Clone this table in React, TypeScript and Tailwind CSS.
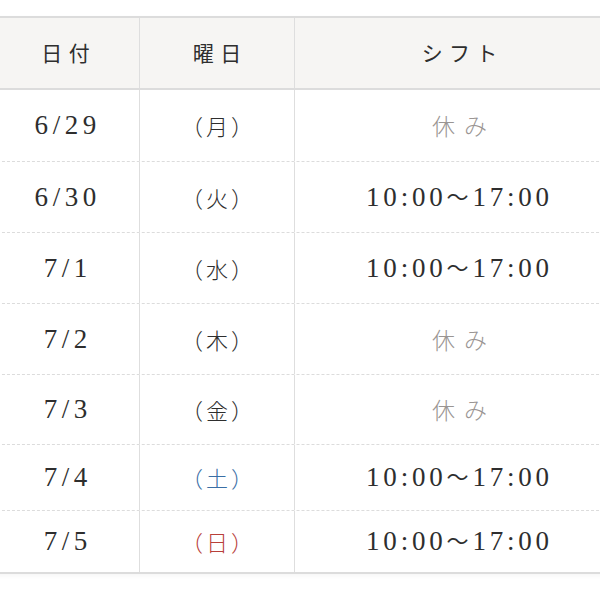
const rows = [
  { date: "6/29", day: "月", shift: null, h: "h-[71px]" },
  { date: "6/30", day: "火", shift: true, h: "h-[71px]" },
  { date: "7/1", day: "水", shift: true, h: "h-[71px]" },
  { date: "7/2", day: "木", shift: null, h: "h-[71px]" },
  { date: "7/3", day: "金", shift: null, h: "h-[70px]" },
  { date: "7/4", day: "土", shift: true, h: "h-[66px]" },
  { date: "7/5", day: "日", shift: true, h: "h-[62px]" },
]

const dayColor = (d: string) =>
  d === "土" ? "text-[#3a6ea5]" : d === "日" ? "text-[#b8403a]" : "text-[#2e2e2e]"

export default function App() {
  return (
    <div className="w-[600px] h-[600px] bg-white pt-4 font-['Liberation_Serif','Noto_Sans_CJK_JP',serif] text-[#2e2e2e] overflow-hidden">
      <div className="w-[632px] -ml-[8px] border-t-2 border-b-2 border-[#dcdcdc] shadow-[0_2px_4px_rgba(0,0,0,0.04)]">
        {/* header */}
        <div className="grid grid-cols-[147px_155px_1fr] h-[72px] bg-[#f6f5f3] border-b-2 border-[#dcdcdc] text-[21px] font-['Noto_Sans_CJK_JP',serif]">
          <div className="flex items-center justify-center tracking-[0.3em] pl-[0.3em]">日付</div>
          <div className="flex items-center justify-center border-l border-[#dedede] tracking-[0.3em] pl-[0.3em]">曜日</div>
          <div className="flex items-center justify-center border-l border-[#dedede] tracking-[0.3em] pl-[0.3em]">シフト</div>
        </div>
        {rows.map((r, i) => (
          <div
            key={r.date}
            className={`grid grid-cols-[147px_155px_1fr] ${r.h} ${i > 0 ? "border-t border-dashed border-[#dcdcdc]" : ""}`}
          >
            <div className="flex items-center justify-center text-[27px] tracking-[0.17em] pl-[0.17em]">{r.date}</div>
            <div className={`flex items-center justify-center border-l border-[#dedede] text-[22px] font-['Noto_Sans_CJK_JP',serif] font-light ${dayColor(r.day)}`}>
              <span>（</span>
              <span className="px-[3px]">{r.day}</span>
              <span>）</span>
            </div>
            <div className="flex items-center justify-center border-l border-[#dedede]">
              {r.shift ? (
                <span className="flex items-center text-[27px] tracking-[0.14em]">
                  <span>10:00</span>
                  <span className="text-[22px] tracking-normal mr-[4px]">～</span>
                  <span>17:00</span>
                </span>
              ) : (
                <span className="text-[23px] text-[#9a9593] font-['Noto_Sans_CJK_JP',serif] font-light tracking-[0.4em] pl-[0.4em]">休み</span>
              )}
            </div>
          </div>
        ))}
      </div>
    </div>
  )
}
